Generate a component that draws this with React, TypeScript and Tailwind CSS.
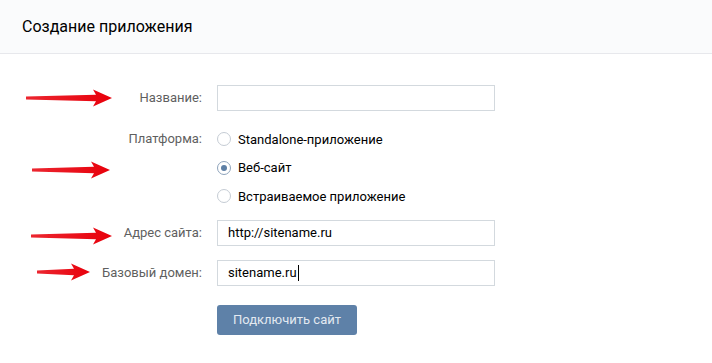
import React from "react"

function Arrow({ className, width }: { className: string; width: number }) {
  const head = 16
  const h = 18
  const mid = h / 2
  return (
    <svg className={className} width={width} height={h} viewBox={`0 0 ${width} ${h}`}>
      <defs>
        <linearGradient id={`g${width}`} x1="0" x2="1" y1="0" y2="0">
          <stop offset="0" stopColor="#e8000b" stopOpacity="0.85" />
          <stop offset="1" stopColor="#e8000b" />
        </linearGradient>
      </defs>
      <polygon
        fill={`url(#g${width})`}
        points={`0,${mid - 1.6} ${width - head},${mid - 3.2} ${width - head - 3},${mid - 8.5} ${width},${mid} ${width - head - 3},${mid + 8.5} ${width - head},${mid + 3.2} 0,${mid + 1.6}`}
      />
    </svg>
  )
}

function Field({ label, value, caret }: { label: string; value?: string; caret?: boolean }) {
  return (
    <div className="flex items-center h-[26px]">
      <div className="w-[202px] text-right text-[#5f5f5f]">{label}</div>
      <div className="ml-[15px] w-[278px] h-[26px] border border-[#d3d9de] bg-white px-[10px] flex items-center text-black">
        {value}
        {caret && <span className="inline-block w-px h-[16px] bg-black ml-[1px]" />}
      </div>
    </div>
  )
}

function Radio({ label, checked }: { label: string; checked?: boolean }) {
  return (
    <div className="flex items-center h-[28.5px]">
      <span
        className={
          "w-[14px] h-[14px] rounded-full border flex items-center justify-center bg-white " +
          (checked ? "border-[#8ea3bb]" : "border-[#c5ccd4]")
        }
      >
        {checked && <span className="w-[6px] h-[6px] rounded-full bg-[#5d7fa5]" />}
      </span>
      <span className="ml-[7px] text-black">{label}</span>
    </div>
  )
}

export default function App() {
  return (
    <div className="relative w-[712px] h-[363px] bg-white text-[13px] overflow-hidden" style={{ fontFamily: "Roboto, 'Noto Sans', sans-serif" }}>
      <div className="h-[54px] bg-[#fafbfc] border-b border-[#e7e8ec] flex items-center pl-[22px] pt-[1px]">
        <h1 className="text-[16px] text-black">Создание приложения</h1>
      </div>

      <div className="pt-[31px] flex flex-col">
        <Field label="Название:" />

        <div className="flex mt-[14px]">
          <div className="w-[202px] text-right text-[#5f5f5f] leading-[28px]">Платформа:</div>
          <div className="ml-[15px] flex flex-col">
            <Radio label="Standalone-приложение" />
            <Radio label="Веб-сайт" checked />
            <Radio label="Встраиваемое приложение" />
          </div>
        </div>

        <div className="mt-[9px]">
          <Field label="Адрес сайта:" value="http://sitename.ru" />
        </div>
        <div className="mt-[14px]">
          <Field label="Базовый домен:" value="sitename.ru" caret />
        </div>

        <div className="ml-[217px] mt-[19px]">
          <button className="w-[140px] h-[30px] rounded-[3px] bg-[#5e81a8] text-[#e3e9f1] text-[13px]">
            Подключить сайт
          </button>
        </div>
      </div>

      <Arrow className="absolute left-[26px] top-[89px]" width={86} />
      <Arrow className="absolute left-[32px] top-[161px]" width={78} />
      <Arrow className="absolute left-[31px] top-[227px]" width={81} />
      <Arrow className="absolute left-[37px] top-[263px]" width={53} />
    </div>
  )
}
